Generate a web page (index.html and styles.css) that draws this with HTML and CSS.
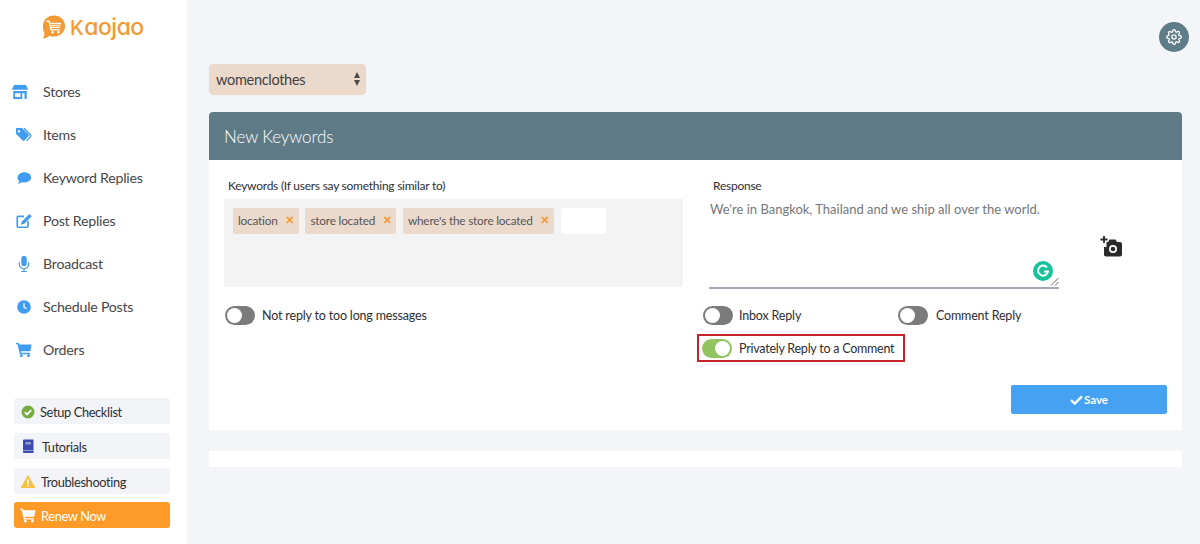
FILE: index.html
```html
<!DOCTYPE html>
<html lang="en">
<head>
<meta charset="utf-8">
<title>Kaojao</title>
<link rel="stylesheet" href="styles.css">
</head>
<body>
<div class="app">
  <aside class="sidebar">
    <div class="logo">
      <svg class="logo-mark" viewBox="0 0 26 26" width="25" height="26">
        <path fill="#f39a34" d="M13.500 1C20 1 25 5.800 25 12s-5 11-11.500 11c-1.700 0-3.300-.3-4.700-.9C7 23.800 4.500 25 1.500 25c1.300-1.500 2-3.200 2-5.200C2.500 17.700 2 14.900 2 12 2 5.800 7 1 13.500 1z"/>
        <path fill="none" stroke="#fff" stroke-width="1.500" stroke-linecap="round" stroke-linejoin="round" d="M6 7h2.500l2 9h9"/>
        <path fill="#fff" d="M9.300 8.500h11.700l-1.500 5.500h-9z"/>
        <path stroke="#f39a34" stroke-width=".9" d="M9.500 10.300h11M10 12.200h10"/>
        <circle cx="12" cy="18.500" r="1.300" fill="#fff"/><circle cx="18" cy="18.500" r="1.300" fill="#fff"/>
      </svg>
      <span class="logo-text"><span class="logo-k">K</span>aojao</span>
    </div>
    <nav class="nav">
      <a class="nav-item">
        <svg class="nav-icon store" viewBox="0 0 18 16"><path fill="#3f9cf0" d="M2.500 0h13L18 5.500H0z"/><path fill="#3f9cf0" d="M1.500 7h15v9h-2.500V9.500h-2.500V16H1.500zM3.500 9.500V13.500h6V9.500z"/></svg>
        <span>Stores</span>
      </a>
      <a class="nav-item">
        <svg class="nav-icon shift" viewBox="0 0 18 16"><path fill="#3f9cf0" d="M0 1.500A1.500 1.500 0 0 1 1.500 0h5L14 7.500a1.500 1.500 0 0 1 0 2L9.500 14a1.500 1.500 0 0 1-2 0L0 6.500zM3.500 2.500a1.300 1.300 0 1 0 0 2.600 1.300 1.300 0 0 0 0-2.600z"/><path fill="none" stroke="#3f9cf0" stroke-width="1.500" d="M9 .5l7.500 7.800a1 1 0 0 1 0 1.200L12 14.500"/></svg>
        <span>Items</span>
      </a>
      <a class="nav-item">
        <svg class="nav-icon shift" viewBox="0 0 18 16"><path fill="#3f9cf0" d="M9.500 1.500c4.200 0 7.500 2.600 7.500 5.800s-3.300 5.800-7.500 5.800c-1 0-2-.1-2.900-.4-1 .9-2.500 1.600-4.300 1.600.7-.8 1.200-1.800 1.300-2.900C2.300 10.400 1.800 8.900 1.800 7.300c0-3.200 3.500-5.800 7.700-5.800z"/></svg>
        <span>Keyword Replies</span>
      </a>
      <a class="nav-item">
        <svg class="nav-icon shift" viewBox="0 0 18 16"><path fill="none" stroke="#3f9cf0" stroke-width="1.800" d="M9 2.900H2.500A1 1 0 0 0 1.500 4v9.900a1 1 0 0 0 1 1h10a1 1 0 0 0 1-1V8"/><path fill="#3f9cf0" d="M15 .2l2.600 2.500L9 11.300l-3.300.7.700-3.300z"/></svg>
        <span>Post Replies</span>
      </a>
      <a class="nav-item">
        <svg class="nav-icon shift tall" viewBox="0 0 18 18"><rect x="6" y="0" width="6" height="11.500" rx="3" fill="#3f9cf0"/><path fill="none" stroke="#3f9cf0" stroke-width="1.300" d="M3.700 7v2a5.300 5.300 0 0 0 10.600 0V7M9 14.300V17M6 17.300h6"/></svg>
        <span>Broadcast</span>
      </a>
      <a class="nav-item">
        <svg class="nav-icon shift" viewBox="0 0 18 16"><circle cx="9" cy="8" r="7.600" fill="#3f9cf0"/><path fill="none" stroke="#fff" stroke-width="1.400" d="M9 3.800V8.300l2.800 1.700"/></svg>
        <span>Schedule Posts</span>
      </a>
      <a class="nav-item">
        <svg class="nav-icon shift" viewBox="0 0 18 16"><use href="#cart" fill="#3f9cf0"/></svg>
        <span>Orders</span>
      </a>
    </nav>
    <div class="helpers">
      <a class="helper">
        <svg class="helper-icon" viewBox="0 0 14 14"><circle cx="7" cy="7" r="6.500" fill="#76ad42"/><path fill="none" stroke="#fff" stroke-width="1.800" d="M3.800 7.200l2.200 2.200 4.200-4.300"/></svg>
        <span>Setup Checklist</span>
      </a>
      <a class="helper">
        <svg class="helper-icon tut" viewBox="0 0 14 14"><path fill="#3a4bab" d="M2 1a1 1 0 0 1 1-1h9.500v13.500H3a1 1 0 0 1-1-1z"/><rect x="4.500" y="2.500" width="5.500" height="2.500" fill="#8f9ad6"/><rect x="2" y="10.500" width="10.500" height="1" fill="#8f9ad6"/></svg>
        <span>Tutorials</span>
      </a>
      <a class="helper">
        <svg class="helper-icon wide" viewBox="0 0 16 14"><path fill="#f8c13f" d="M8 .5l7.500 13H.5z"/><rect x="7.200" y="5" width="1.600" height="4.500" fill="#fff"/><rect x="7.200" y="10.300" width="1.600" height="1.600" fill="#fff"/></svg>
        <span>Troubleshooting</span>
      </a>
      <a class="helper renew">
        <svg class="helper-icon wide" viewBox="0 0 18 16"><use href="#cart" fill="#fff"/></svg>
        <span>Renew Now</span>
      </a>
    </div>
  </aside>

  <main class="main">
    <div class="topbar">
      <span class="gear">
        <svg viewBox="0 0 24 24" width="16" height="16" fill="none" stroke="#fff" stroke-width="2"><circle cx="12" cy="12" r="3.200"/><path d="M19.400 15a1.650 1.650 0 0 0 .33 1.820l.06.06a2 2 0 1 1-2.830 2.830l-.06-.06a1.650 1.650 0 0 0-2.800 1.170V21a2 2 0 0 1-4 0v-.09a1.650 1.650 0 0 0-2.830-1.170l-.06.06a2 2 0 1 1-2.830-2.830l.06-.06A1.650 1.650 0 0 0 3.090 14H3a2 2 0 0 1 0-4h.09a1.650 1.650 0 0 0 1.170-2.800l-.06-.06a2 2 0 1 1 2.830-2.830l.06.06A1.650 1.650 0 0 0 10 3.090V3a2 2 0 0 1 4 0v.09a1.650 1.650 0 0 0 2.800 1.170l.06-.06a2 2 0 1 1 2.830 2.830l-.06.06A1.650 1.650 0 0 0 20.910 10H21a2 2 0 0 1 0 4h-.09a1.650 1.650 0 0 0-1.510 1z"/></svg>
      </span>
    </div>

    <div class="store-select">
      <span>womenclothes</span>
      <span class="arrows"><i class="up"></i><i class="down"></i></span>
    </div>

    <section class="card">
      <h1 class="card-title">New Keywords</h1>
      <div class="card-body">
        <div class="col-left">
          <label class="field-label">Keywords (If users say something similar to)</label>
          <div class="tag-box">
            <span class="tag">location <b>×</b></span>
            <span class="tag">store located <b>×</b></span>
            <span class="tag">where's the store located <b>×</b></span>
            <span class="tag-input"></span>
          </div>
          <div class="toggle-row first">
            <span class="toggle"></span>
            <span>Not reply to too long messages</span>
          </div>
        </div>
        <div class="col-right">
          <label class="field-label response-label">Response</label>
          <div class="response-row">
            <div class="response">
              <span>We're in Bangkok, Thailand and we ship all over the world.</span>
              <span class="grammarly">
                <svg viewBox="0 0 20 20" width="20" height="20"><circle cx="10" cy="10" r="10" fill="#15c39a"/><path fill="none" stroke="#fff" stroke-width="2" d="M14 6.500A5 5 0 1 0 15 10.500h-4"/></svg>
              </span>
              <svg class="resize" viewBox="0 0 9 9" width="9" height="9"><path stroke="#666" stroke-width="1" d="M1 8.500L8.500 1M5 8.500L8.500 5"/></svg>
            </div>
            <svg class="camera" viewBox="0 0 22 21" width="22" height="21"><path fill="#2b2b2b" d="M8 6l1.500-2.500h6L17 6h3a2 2 0 0 1 2 2v10.500a2 2 0 0 1-2 2H6a2 2 0 0 1-2-2V11h2.500V6z"/><circle cx="13" cy="13" r="4" fill="#fff"/><circle cx="13" cy="13" r="2.300" fill="#2b2b2b"/><path stroke="#2b2b2b" stroke-width="1.800" d="M4 0v7M.5 3.500h7"/></svg>
          </div>
          <div class="toggle-row">
            <div class="toggle-cell inbox"><span class="toggle"></span><span>Inbox Reply</span></div>
            <div class="toggle-cell comment"><span class="toggle"></span><span>Comment Reply</span></div>
          </div>
          <div class="highlight">
            <span class="toggle on"></span><span>Privately Reply to a Comment</span>
          </div>
        </div>
        <div class="actions">
          <button class="save" type="button">
            <svg viewBox="0 0 14 11" width="13" height="10"><path fill="none" stroke="#fff" stroke-width="2.600" d="M1 5.500l4 4 8-8"/></svg>
            Save
          </button>
        </div>
      </div>
    </section>
    <div class="strip"></div>
  </main>
</div>
<svg class="defs" width="0" height="0"><symbol id="cart" viewBox="0 0 18 16"><path d="M0 0h3.200l.5 2H17.500l-1.600 7.500H5.400l.3 1.500h10v1.600H4.300L1.900 1.600H0z"/><circle cx="6" cy="14.400" r="1.600"/><circle cx="14" cy="14.400" r="1.600"/></symbol></svg>
</body>
</html>
```
FILE: styles.css
```css
* { box-sizing: border-box; }
html, body { margin: 0; height: 100%; }
body {
  font-family: "Lato", "Open Sans", sans-serif;
  font-size: 14px;
  color: #3f3f44;
  background: #f4f5f8;
  overflow: hidden;
}
.defs { position: absolute; }
.app { display: flex; height: 544px; }

/* Sidebar */
.sidebar {
  width: 187px;
  flex: none;
  background: #fff;
  display: flex;
  flex-direction: column;
  padding-top: 14px;
}
.logo {
  display: flex;
  align-items: center;
  gap: 4px;
  padding-left: 41px;
  height: 26px;
}
.logo-text {
  font-family: "Inter", sans-serif;
  font-feature-settings: "cv11";
  font-size: 23px;
  font-weight: 500;
  color: #f39a34;
  letter-spacing: -.5px;
  line-height: 26px;
}
.logo-k { font-size: 20px; margin-right: 1px; }
.nav { margin-top: 30px; display: flex; flex-direction: column; }
.nav-item {
  height: 43px;
  display: flex;
  align-items: center;
  gap: 13px;
  padding-left: 12px;
  font-size: 14.200px;
  letter-spacing: -.25px;
  color: #47474c;
}
.nav-icon { width: 18px; height: 16px; flex: none; }
.nav-icon.store { transform: translateX(-1px) scale(.9); }
.nav-icon.shift { transform: translateX(3px) scale(.9); }
.nav-icon.tall { height: 18px; }
.helpers {
  margin-top: 27px;
  padding: 0 17px 0 14px;
  display: flex;
  flex-direction: column;
  gap: 9px;
}
.helper {
  height: 26px;
  border-radius: 3px;
  background: #f3f4f7;
  display: flex;
  align-items: center;
  gap: 5px;
  padding: 1px 0 0 7px;
  font-size: 12.800px;
  letter-spacing: -.35px;
  color: #2e2e33;
}
.helper-icon { width: 14px; height: 14px; flex: none; }
.helper-icon.tut { margin-right: 2px; height: 15px; }
.helper-icon.wide { width: 16px; height: 15px; margin-left: -1px; }
.renew { background: #fe9a28; color: #fff; margin-top: -1px; }

/* Main */
.main { flex: 1; padding: 0 18px 0 22px; min-width: 0; }
.topbar { height: 64px; display: flex; justify-content: flex-end; padding-top: 22px; }
.gear {
  width: 30px;
  height: 30px;
  margin-right: -7px;
  border-radius: 50%;
  background: #5f7c89;
  display: flex;
  align-items: center;
  justify-content: center;
}
.store-select {
  width: 157px;
  height: 31px;
  background: #ebdacb;
  border-radius: 5px;
  display: flex;
  align-items: center;
  justify-content: space-between;
  padding: 0 5px 1px 7px;
  font-size: 14.500px;
  letter-spacing: -.3px;
  color: #3f3f44;
  box-shadow: 0 0 1px #d6d0c8;
}
.arrows { display: flex; flex-direction: column; gap: 2px; width: 7px; }
.arrows i { display: block; width: 0; height: 0; border-left: 3.500px solid transparent; border-right: 3.500px solid transparent; }
.arrows .up { border-bottom: 6px solid #4a4a4a; }
.arrows .down { border-top: 6px solid #4a4a4a; }

.card { margin-top: 17px; background: #fff; height: 318px; }
.card-title {
  margin: 0;
  height: 48px;
  background: #5f7a87;
  border-radius: 4px 4px 0 0;
  color: #fff;
  font-size: 17px;
  font-weight: 300;
  letter-spacing: -.1px;
  line-height: 50px;
  padding-left: 15px;
}
.card-body {
  display: grid;
  grid-template-columns: 474px 1fr;
  padding: 18px 0 0 15px;
}
.field-label { display: block; font-size: 12px; letter-spacing: -.25px; line-height: 16px; color: #2e2e33; }
.col-left .field-label { padding-left: 4px; }
.tag-box {
  margin-top: 5px;
  width: 459px;
  height: 88px;
  background: #f3f3f3;
  padding: 9px;
  display: flex;
  align-items: flex-start;
  gap: 6.500px;
}
.tag {
  height: 26px;
  padding: 0 5px 0 5px;
  background: #ebdacb;
  border-radius: 2px;
  font-size: 11.800px;
  letter-spacing: -.2px;
  line-height: 25px;
  color: #55555a;
  white-space: nowrap;
}
.tag b { color: #f39a34; margin-left: 5px; font-size: 15px; line-height: 14px; font-weight: 900; }
.tag-input { width: 45px; height: 26px; background: #fff; border-radius: 2px; }
.toggle-row { display: flex; align-items: center; font-size: 12.500px; letter-spacing: -.17px; color: #2e2e33; height: 20px; margin-top: 16px; white-space: nowrap; }
.toggle-row.first { gap: 7px; margin-top: 18px; padding-left: 1px; }
.toggle {
  display: block;
  position: relative;
  width: 30px;
  height: 19px;
  border-radius: 10px;
  background: #7b7b7b;
  flex: none;
}
.toggle::after {
  content: "";
  position: absolute;
  left: 2px;
  top: 2px;
  width: 15px;
  height: 15px;
  border-radius: 50%;
  background: #fff;
}
.toggle.on { background: #91c460; }
.toggle.on::after { left: 13px; }
.col-right { padding-left: 11px; }
.col-right .field-label { padding-left: 4px; }
.response-row { display: flex; align-items: flex-start; margin-top: 7px; }
.response {
  position: relative;
  width: 350px;
  height: 88px;
  padding-left: 1px;
  border-bottom: 2px solid #a3a9b4;
  font-size: 13px;
  line-height: 16px;
  color: #76767a;
}
.grammarly { position: absolute; right: 6px; bottom: 6px; width: 20px; height: 20px; }
.resize { position: absolute; right: 0; bottom: 1px; }
.camera { margin: 35px 0 0 41px; }
.toggle-cell { display: flex; align-items: center; gap: 6px; }
.comment { gap: 8px; }
.inbox { width: 195px; }
.col-right .toggle-row { margin-left: -6px; }
.highlight {
  display: flex;
  align-items: center;
  gap: 7px;
  margin: 9px 0 0 -12px;
  width: 208px;
  height: 28px;
  border: 2px solid #c8232c;
  padding-left: 3px;
  font-size: 12.500px;
  letter-spacing: -.24px;
  white-space: nowrap;
  color: #2e2e33;
}
.actions { grid-column: 1 / -1; display: flex; justify-content: flex-end; margin-top: 23px; padding-right: 15px; }
.save {
  width: 156px;
  height: 29px;
  border: 0;
  border-radius: 2px;
  background: #45a2f3;
  color: #fff;
  font-family: inherit;
  font-size: 11.500px;
  font-weight: 700;
  display: flex;
  align-items: center;
  justify-content: center;
  gap: 1px;
}
.strip { margin-top: 21px; height: 16px; background: #fff; }
```
